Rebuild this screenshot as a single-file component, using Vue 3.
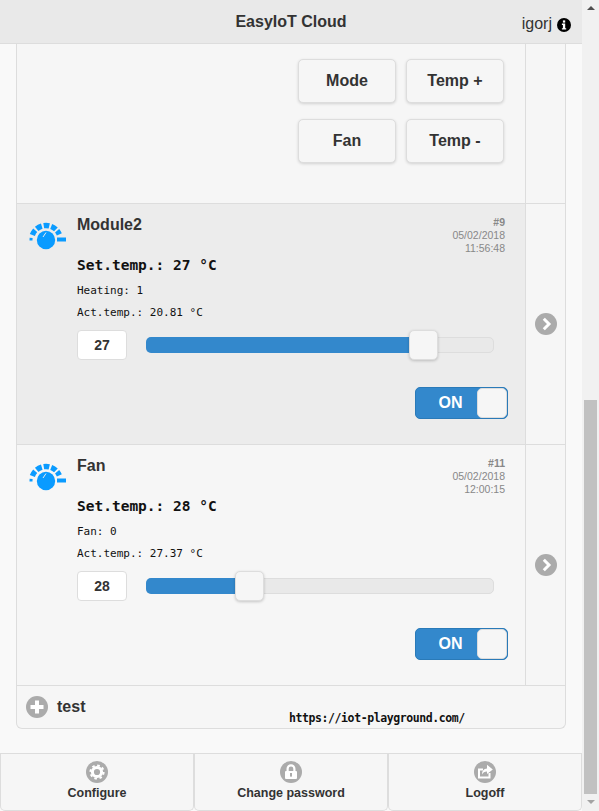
<script setup>
const modules = [
  { id: 9, name: 'Module2', date: '05/02/2018', time: '11:56:48', setTemp: 27, info: 'Heating: 1', act: '20.81', pct: 80, dark: true },
  { id: 11, name: 'Fan', date: '05/02/2018', time: '12:00:15', setTemp: 28, info: 'Fan: 0', act: '27.37', pct: 29.8, dark: false },
]
const footer = ['Configure', 'Change password', 'Logoff']

// dial segments, angles in degrees from straight up
function arc(from, to, r = 14.5) {
  const pt = (a) => {
    const rad = (a * Math.PI) / 180
    return `${(17 + r * Math.sin(rad)).toFixed(2)} ${(19 - r * Math.cos(rad)).toFixed(2)}`
  }
  return `M${pt(from)}A${r} ${r} 0 0 1 ${pt(to)}`
}
const dialArcs = [[-70, -48], [-40, -17], [-9, 13], [21, 43], [50, 67]].map(([a, b]) => arc(a, b))
const dialDot = arc(-92, -82, 15)
</script>

<template>
  <div class="page">
    <div class="main">
      <header class="top">
        <h1>EasyIoT Cloud</h1>
        <div class="user">
          <span>igorj</span>
          <svg class="info" viewBox="0 0 14 14" width="14" height="14">
            <circle cx="7" cy="7" r="7" fill="#000" />
            <rect x="5.9" y="2.4" width="2.3" height="2.2" fill="#fff" />
            <path d="M4.9 5.6h3.3v4.6h1v1.3H4.9v-1.3h1V6.9h-1z" fill="#fff" />
          </svg>
        </div>
      </header>

      <div class="content">
        <div class="panel">
          <div class="row row-buttons">
            <div class="cell">
              <div class="buttons">
                <button>Mode</button>
                <button>Temp +</button>
                <button>Fan</button>
                <button>Temp -</button>
              </div>
            </div>
            <div class="side"></div>
          </div>

          <div v-for="m in modules" :key="m.id" class="row" :class="{ dark: m.dark }">
            <div class="cell module">
              <div class="head">
                <svg class="dial" viewBox="0 0 38 30" width="38" height="30">
                  <circle cx="17" cy="19" r="9.2" fill="#0a9bff" />
                  <path d="M17 11.5l-3 4.5" stroke="#ececec" stroke-width="1" />
                  <g fill="none" stroke="#0a9bff" stroke-width="5.4">
                    <path v-for="(d, i) in dialArcs" :key="i" :d="d" />
                    <path :d="dialDot" stroke-width="3" />
                    <path d="M28 18.5h9" stroke-width="4" />
                  </g>
                </svg>
                <div class="name">{{ m.name }}</div>
                <div class="meta">
                  <b>#{{ m.id }}</b>
                  <span>{{ m.date }}</span>
                  <span>{{ m.time }}</span>
                </div>
              </div>
              <div class="readings">
                <div class="big">Set.temp.: {{ m.setTemp }} °C</div>
                <div class="small first">{{ m.info }}</div>
                <div class="small">Act.temp.: {{ m.act }} °C</div>
              </div>
              <div class="slider-row">
                <div class="value">{{ m.setTemp }}</div>
                <div class="track">
                  <div class="fill" :style="{ width: m.pct + '%' }"></div>
                  <div class="thumb" :style="{ left: m.pct + '%' }"></div>
                </div>
              </div>
              <div class="switch-row">
                <div class="switch">
                  <span>ON</span>
                  <i></i>
                </div>
              </div>
            </div>
            <div class="side">
              <svg viewBox="0 0 22 22" width="22" height="22">
                <circle cx="11" cy="11" r="11" fill="#ababab" />
                <path d="M8.8 5.8l5.2 5.2-5.2 5.2" fill="none" stroke="#fff" stroke-width="3" />
              </svg>
            </div>
          </div>

          <div class="add">
            <svg viewBox="0 0 22 22" width="22" height="22">
              <circle cx="11" cy="11" r="11" fill="#ababab" />
              <path d="M11 4.5v13M4.5 11h13" stroke="#fff" stroke-width="4" />
            </svg>
            <span>test</span>
            <em class="url">https://iot-playground.com/</em>
          </div>
        </div>
      </div>

      <footer class="bottom">
        <a v-for="(label, i) in footer" :key="label">
          <svg viewBox="0 0 22 22" width="22" height="22">
            <circle cx="11" cy="11" r="11" fill="#ababab" />
            <g v-if="i === 0">
              <circle cx="11" cy="11" r="4.6" fill="none" stroke="#fff" stroke-width="3" />
              <circle cx="11" cy="11" r="6.6" fill="none" stroke="#fff" stroke-width="2" stroke-dasharray="2.6 2.58" />
            </g>
            <g v-else-if="i === 1">
              <path d="M7.6 10V7.800a3.400 3.400 0 0 1 6.800 0V10" fill="none" stroke="#fff" stroke-width="2.200" />
              <rect x="5" y="10" width="12" height="8" rx="1" fill="#fff" />
              <rect x="10" y="12" width="2" height="3.6" fill="#ababab" />
            </g>
            <g v-else>
              <path d="M15.500 12v4.500h-10.500V8.500h4" fill="none" stroke="#fff" stroke-width="2" />
              <path d="M13 3.800l5.800 4.600-5.800 4.600V10.500c-2.500 0-4 1-5 3 0-3.700 2-6 5-6.100z" fill="#fff" />
            </g>
          </svg>
          <span>{{ label }}</span>
        </a>
      </footer>
    </div>

    <div class="scrollbar">
      <div class="arrow up"></div>
      <div class="gap"></div>
      <div class="bar"></div>
      <div class="arrow down"></div>
    </div>
  </div>
</template>

<style>
html, body {
  margin: 0;
  overflow: hidden;
}
</style>

<style scoped>
.page {
  display: flex;
  height: 811px;
  font-family: "Liberation Sans", Arial, sans-serif;
  color: #333;
  background: #f9f9f9;
}

.main {
  width: 582px;
  display: flex;
  flex-direction: column;
}

.top {
  height: 43px;
  flex: none;
  position: relative;
  display: flex;
  align-items: center;
  justify-content: center;
  background: #e9e9e9;
  border-bottom: 1px solid #ddd;
}

.top h1 {
  margin: 0;
  font-size: 16px;
  font-weight: bold;
}

.user {
  position: absolute;
  right: 11px;
  top: 15px;
  display: flex;
  align-items: center;
  gap: 5px;
  font-size: 16px;
  line-height: 18px;
}

.info {
  margin-top: 2px;
}

.content {
  flex: 1;
  padding: 0 16px;
}

.panel {
  border: 1px solid #ddd;
  border-top: 0;
  border-radius: 0 0 6px 6px;
  background: #f6f6f6;
}

.row {
  display: flex;
  height: 240px;
  border-bottom: 1px solid #ddd;
}

.row-buttons {
  height: 159px;
}

.row.dark .cell {
  background: #ececec;
}

.cell {
  flex: none;
  width: 509px;
  box-sizing: border-box;
  border-right: 1px solid #ddd;
}

.side {
  flex: 1;
  display: flex;
  align-items: center;
  justify-content: center;
}

.buttons {
  display: grid;
  grid-template-columns: 98px 98px;
  column-gap: 10px;
  row-gap: 16px;
  padding-top: 15px;
  margin-left: 281px;
}

.buttons button {
  height: 44px;
  box-sizing: border-box;
  border: 1px solid #ddd;
  border-radius: 5px;
  background: #f6f6f6;
  box-shadow: 0 1px 3px rgba(0, 0, 0, 0.15);
  font: bold 16px "Liberation Sans", Arial, sans-serif;
  color: #333;
  padding: 0;
}

.module {
  padding: 12px 20px 0 12px;
}

.head {
  display: flex;
  align-items: flex-start;
}

.dial {
  flex: none;
  margin: 5px 10px 0 0;
  width: 38px;
  height: 30px;
}

.name {
  flex: 1;
  font-size: 16px;
  font-weight: bold;
  line-height: 18px;
}

.meta {
  display: flex;
  flex-direction: column;
  align-items: flex-end;
  font-size: 10.5px;
  line-height: 13px;
  color: #888;
}

.readings {
  margin: 1px 0 0 48px;
  font-family: "DejaVu Sans Mono", monospace;
  color: #111;
}

.big {
  font-size: 14.5px;
  font-weight: bold;
  line-height: 18px;
}

.small {
  font-size: 11px;
  line-height: 14px;
  margin-top: 8px;
}

.small.first {
  margin-top: 10px;
}

.slider-row {
  display: flex;
  align-items: center;
  margin: 10px 0 0 48px;
}

.value {
  width: 50px;
  height: 30px;
  box-sizing: border-box;
  border: 1px solid #ddd;
  border-radius: 4px;
  background: #fff;
  font-size: 14px;
  font-weight: bold;
  line-height: 28px;
  text-align: center;
}

.track {
  position: relative;
  margin-left: 19px;
  width: 348px;
  height: 16px;
  box-sizing: border-box;
  border: 1px solid #ddd;
  border-radius: 5px;
  background: #e9e9e9;
}

.fill {
  position: absolute;
  left: -1px;
  top: -1px;
  bottom: -1px;
  background: #3388cc;
  border-radius: 5px 0 0 5px;
}

.thumb {
  position: absolute;
  top: -8px;
  width: 29px;
  height: 30px;
  margin-left: -15px;
  box-sizing: border-box;
  border: 1px solid #ddd;
  border-radius: 5px;
  background: #f6f6f6;
  box-shadow: 0 1px 3px rgba(0, 0, 0, 0.2);
}

.switch-row {
  display: flex;
  justify-content: flex-end;
  margin: 27px -3px 0 0;
}

.switch {
  width: 93px;
  height: 32px;
  box-sizing: border-box;
  border: 1px solid #2a7ab8;
  border-radius: 5px;
  background: #3388cc;
  position: relative;
  color: #fff;
  font-size: 16px;
  font-weight: bold;
  line-height: 29px;
}

.switch span {
  display: block;
  width: 69px;
  text-align: center;
}

.switch i {
  position: absolute;
  right: 0;
  top: 0;
  width: 30px;
  height: 30px;
  box-sizing: border-box;
  border: 1px solid #ddd;
  border-radius: 5px;
  background: #f6f6f6;
}

.add {
  height: 42px;
  position: relative;
  display: flex;
  align-items: center;
  gap: 9px;
  padding-left: 9px;
  font-size: 16px;
  font-weight: bold;
}

.url {
  position: absolute;
  left: 272px;
  top: 25px;
  font: bold 11.5px/14px "DejaVu Sans Mono", monospace;
  font-style: normal;
  letter-spacing: -0.41px;
  color: #111;
}

.bottom {
  flex: none;
  height: 58px;
  box-sizing: border-box;
  display: flex;
  border-top: 1px solid #ddd;
}

.bottom a {
  flex: 1;
  display: flex;
  flex-direction: column;
  align-items: center;
  padding-top: 7px;
  gap: 2px;
  border: 1px solid #ddd;
  border-top: 0;
  border-radius: 0 0 5px 5px;
  background: #f6f6f6;
  font-size: 12.5px;
  font-weight: bold;
  line-height: 16px;
}

.scrollbar {
  flex: 1;
  display: flex;
  flex-direction: column;
  background: #f1f1f1;
}

.arrow {
  height: 17px;
  flex: none;
  position: relative;
}

.arrow::after {
  content: "";
  position: absolute;
  left: 5px;
  top: 6px;
  border-left: 4px solid transparent;
  border-right: 4px solid transparent;
}

.arrow.up::after {
  border-bottom: 4px solid #505050;
}

.arrow.down::after {
  border-top: 4px solid #a3a3a3;
}

.gap {
  height: 383px;
  flex: none;
}

.bar {
  flex: 1;
  margin: 0 2px;
  background: #c1c1c1;
}
</style>
